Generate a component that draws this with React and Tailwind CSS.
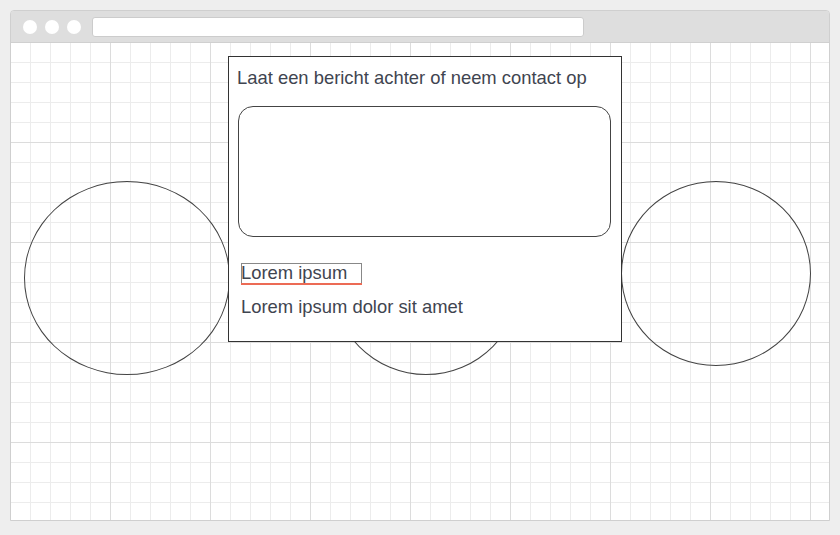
export default function App() {
  return (
    <div className="w-[840px] h-[535px] bg-[#eeeeee] p-[10px] pb-[14px] font-['Liberation_Sans',Arial,sans-serif]">
      <div className="w-[820px] h-[511px] flex flex-col border border-[#cfcfcf] rounded-t-[4px] overflow-hidden">
        {/* Browser bar */}
        <div className="h-[32px] bg-[#dedede] flex items-center gap-[8px] px-[12px] border-b border-[#d0d0d0] shrink-0">
          <span className="w-[14px] h-[14px] rounded-full bg-white"></span>
          <span className="w-[14px] h-[14px] rounded-full bg-white"></span>
          <span className="w-[14px] h-[14px] rounded-full bg-white"></span>
          <div className="ml-[3px] w-[492px] h-[20px] bg-white rounded-[3px] border border-[#cccccc]"></div>
        </div>

        {/* Canvas */}
        <div className="relative flex-1 bg-white bg-[linear-gradient(to_right,#dcdcdc_1px,transparent_1px),linear-gradient(to_bottom,#dcdcdc_1px,transparent_1px),linear-gradient(to_right,#ececec_1px,transparent_1px),linear-gradient(to_bottom,#ececec_1px,transparent_1px)] bg-[size:100px_100px,100px_100px,20px_20px,20px_20px] bg-[position:-1px_-1px]">
          <div className="absolute left-[13px] top-[138px] w-[206px] h-[194px] rounded-[50%] border border-[#444]"></div>
          <div className="absolute left-[320px] top-[141px] w-[190px] h-[191px] rounded-[50%] border border-[#444]"></div>
          <div className="absolute left-[610px] top-[138px] w-[190px] h-[185px] rounded-[50%] border border-[#444]"></div>

          <div className="absolute left-[217px] top-[13px] w-[394px] h-[286px] bg-white border border-[#333] flex flex-col text-[#3f4550]">
            <p className="pl-[8px] pt-[10px] text-[18.4px] leading-[21px]">Laat een bericht achter of neem contact op</p>
            <div className="ml-[9px] mt-[18px] w-[373px] h-[131px] rounded-[15px] border border-[#444]"></div>
            <div className="ml-[12px] mt-[26px] relative w-[121px] h-[21px] border border-[#888] border-b-0">
              <span className="block text-[18.4px] leading-[19px] -mt-[1px] -ml-[1px]">Lorem ipsum</span>
              <div className="absolute left-[-1px] right-[-1px] bottom-[-1px] h-[2px] bg-[#ec6b55]"></div>
            </div>
            <p className="ml-[12px] mt-[12px] text-[18.4px] leading-[21px]">Lorem ipsum dolor sit amet</p>
          </div>
        </div>
      </div>
    </div>
  );
}
